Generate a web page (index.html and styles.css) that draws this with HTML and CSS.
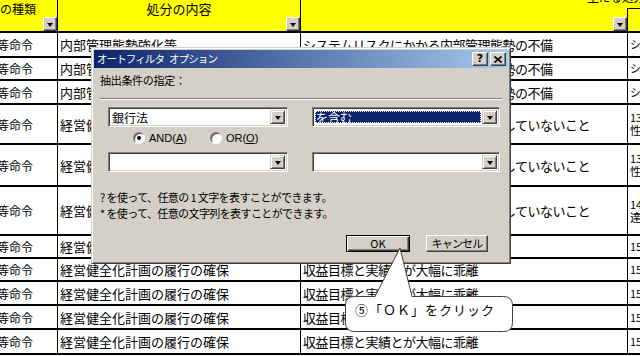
FILE: index.html
```html
<!DOCTYPE html>
<html lang="ja">
<head>
    <meta charset="UTF-8">
    <title>オートフィルタ オプション</title>
    <link rel="stylesheet" href="styles.css">
</head>
<body>
    <div class="sheet">
        <div class="row head">
            <div class="cell col1"><span class="htext">の種類</span><span class="fbtn"></span></div>
            <div class="cell col2"><span class="htext">処分の内容</span><span class="fbtn"></span></div>
            <div class="cell col3 c3h"><span class="over">主たる処分理由</span><span class="fbtn"></span></div>
            <div class="cell col4 c4h"></div>
        </div>

        <div class="row r25">
            <div class="cell col1"><span class="cut">等命令</span></div>
            <div class="cell col2">内部管理態勢強化等</div>
            <div class="cell col3">システムリスクにかかる内部管理態勢の不備</div>
            <div class="cell col4">シ</div>
        </div>
        <div class="row r23">
            <div class="cell col1"><span class="cut">等命令</span></div>
            <div class="cell col2">内部管理態勢強化等</div>
            <div class="cell col3">システムリスクにかかる内部管理態勢の不備</div>
            <div class="cell col4">シ</div>
        </div>
        <div class="row r24">
            <div class="cell col1"><span class="cut">等命令</span></div>
            <div class="cell col2">内部管理態勢強化等</div>
            <div class="cell col3">システムリスクにかかる内部管理態勢の不備</div>
            <div class="cell col4">シ</div>
        </div>
        <div class="row r40">
            <div class="cell col1"><span class="cut">等命令</span></div>
            <div class="cell col2">経営健全化計画の履行の確保</div>
            <div class="cell col3">経営健全化計画の収益目標等を達成していないこと</div>
            <div class="cell col4">13<br>性</div>
        </div>
        <div class="row r42">
            <div class="cell col1"><span class="cut">等命令</span></div>
            <div class="cell col2">経営健全化計画の履行の確保</div>
            <div class="cell col3">経営健全化計画の収益目標等を達成していないこと</div>
            <div class="cell col4">13<br>性</div>
        </div>
        <div class="row r49">
            <div class="cell col1"><span class="cut">等命令</span></div>
            <div class="cell col2">経営健全化計画の履行の確保</div>
            <div class="cell col3">経営健全化計画の収益目標等を達成していないこと</div>
            <div class="cell col4">14<br>達</div>
        </div>
        <div class="row r23">
            <div class="cell col1"><span class="cut">等命令</span></div>
            <div class="cell col2">経営健全化計画の履行の確保</div>
            <div class="cell col3">収益目標と実績とが大幅に乖離</div>
            <div class="cell col4">15</div>
        </div>
        <div class="row r23">
            <div class="cell col1"><span class="cut">等命令</span></div>
            <div class="cell col2">経営健全化計画の履行の確保</div>
            <div class="cell col3">収益目標と実績とが大幅に乖離</div>
            <div class="cell col4">15</div>
        </div>
        <div class="row r24">
            <div class="cell col1"><span class="cut">等命令</span></div>
            <div class="cell col2">経営健全化計画の履行の確保</div>
            <div class="cell col3">収益目標と実績とが大幅に乖離</div>
            <div class="cell col4">15</div>
        </div>
        <div class="row r24">
            <div class="cell col1"><span class="cut">等命令</span></div>
            <div class="cell col2">経営健全化計画の履行の確保</div>
            <div class="cell col3">収益目標と実績とが大幅に乖離</div>
            <div class="cell col4">15</div>
        </div>
        <div class="row r25">
            <div class="cell col1"><span class="cut">等命令</span></div>
            <div class="cell col2">経営健全化計画の履行の確保</div>
            <div class="cell col3">収益目標と実績とが大幅に乖離</div>
            <div class="cell col4">15</div>
        </div>
    </div>

    <!-- AutoFilter dialog -->
    <div class="dialog">
        <div class="titlebar">
            <span class="title">オートフィルタ<span class="gap"></span>オプション</span>
            <span class="tbtn">?</span>
            <span class="tbtn">
                <svg width="8" height="7" viewBox="0 0 8 7"><path d="M0.5 0.5 L7.5 6.5 M7.5 0.5 L0.5 6.5" stroke="#000" stroke-width="1.6"/></svg>
            </span>
        </div>
        <div class="dlg-body">
            <div class="label">抽出条件の指定：</div>
            <div class="sep"></div>

            <div class="combo-row">
                <div class="combo wide"><span class="combo-text">銀行法</span><span class="drop"></span></div>
                <div class="combo narrow"><span class="combo-text selected">を含む</span><span class="drop"></span></div>
            </div>

            <div class="radio-row">
                <label class="radio"><span class="dot checked"></span><span>AND(<u>A</u>)</span></label>
                <label class="radio"><span class="dot"></span><span>OR(<u>O</u>)</span></label>
            </div>

            <div class="combo-row second">
                <div class="combo wide"><span class="combo-text"></span><span class="drop"></span></div>
                <div class="combo narrow"><span class="combo-text"></span><span class="drop"></span></div>
            </div>

            <div class="help">
                <p>? を使って、任意の 1 文字を表すことができます。</p>
                <p>* を使って、任意の文字列を表すことができます。</p>
            </div>

            <div class="actions">
                <button class="btn default">OK</button>
                <button class="btn">キャンセル</button>
            </div>
        </div>
    </div>

    <!-- callout pointing at OK -->
    <div class="callout">
        <svg class="callout-shape" width="180" height="92" viewBox="0 0 180 92">
            <path d="M14.5 52.5 H35 L60 4 L72 52.5 H163.5 Q172.5 52.5 172.5 61.5 V78.5 Q172.5 87.5 163.5 87.5 H14.5 Q5.5 87.5 5.5 78.5 V61.5 Q5.5 52.5 14.5 52.5 Z" fill="#fff" stroke="#404040" stroke-width="1"/>
        </svg>
        <div class="callout-text">⑤「ＯＫ」をクリック</div>
    </div>
</body>
</html>
```

FILE: styles.css
```css
* {
    margin: 0;
    padding: 0;
    box-sizing: border-box;
}

body {
    width: 640px;
    height: 356px;
    overflow: hidden;
    position: relative;
    background-color: #fff;
    color: #000;
    font-family: "Noto Sans CJK JP", sans-serif;
}

/* spreadsheet */
.row {
    display: flex;
    border-bottom: 2px solid #000;
}

.head {
    height: 33px;
    background-color: #ff0;
}

.r23 { height: 23px; }
.r24 { height: 24px; }
.r25 { height: 25px; }
.r40 { height: 40px; }
.r42 { height: 42px; }
.r49 { height: 49px; }

.cell {
    display: flex;
    align-items: center;
    padding-left: 2px;
    white-space: nowrap;
    overflow: hidden;
    font-size: 13px;
    line-height: 15px;
    border-right: 1px solid #000;
}

.col1 {
    width: 58px;
    font-size: 12px;
}

.col2 {
    width: 243px;
}

.col3 {
    width: 327px;
    letter-spacing: -0.5px;
}

.col4 {
    flex: 1;
    border-right: none;
    font-size: 11px;
    line-height: 13px;
    padding-left: 2px;
    overflow: hidden;
}

.cut {
    margin-left: -5px;
}

.head .cell {
    flex-direction: column;
    align-items: stretch;
    padding: 0;
    overflow: visible;
}

.htext {
    text-align: center;
    padding-top: 2px;
    line-height: 14px;
}

.head .col1 .htext {
    text-align: left;
}

.head .c3h {
    width: 326px;
    border-right: none;
}

.over {
    margin-left: 286px;
    margin-top: -10px;
    height: 13px;
    line-height: 13px;
    font-size: 12px;
}

.head .c4h {
    margin-top: 8px;
    border-left: 1px solid #000;
    border-top: 1px solid #000;
}

.fbtn {
    margin-top: auto;
    align-self: flex-end;
    width: 14px;
    height: 14px;
    position: relative;
    background-color: #d4d0c8;
    border: 1px solid;
    border-color: #fff #404040 #404040 #fff;
    box-shadow: inset -1px -1px #808080;
}

.fbtn::after,
.drop::after {
    content: "";
    position: absolute;
    left: 50%;
    top: 50%;
    margin-left: -3px;
    margin-top: -1px;
    border-left: 3.5px solid transparent;
    border-right: 3.5px solid transparent;
    border-top: 4px solid #000;
}

/* dialog */
.dialog {
    position: absolute;
    left: 91px;
    top: 47px;
    width: 420px;
    height: 217px;
    padding: 2px;
    background-color: #d4d0c8;
    border: 1px solid;
    border-color: #d4d0c8 #404040 #404040 #d4d0c8;
    box-shadow: inset 1px 1px #fff, inset -1px -1px #808080;
    font-size: 11px;
    line-height: 12px;
}

.titlebar {
    height: 18px;
    display: flex;
    align-items: center;
    padding: 0 2px 0 3px;
    background: linear-gradient(to right, #0a246a, #a6caf0);
    color: #fff;
}

.title {
    flex: 1;
    display: flex;
    font-size: 10.5px;
    letter-spacing: -0.9px;
}

.gap {
    width: 5px;
}

.tbtn {
    width: 16px;
    height: 14px;
    display: flex;
    align-items: center;
    justify-content: center;
    background-color: #d4d0c8;
    border: 1px solid;
    border-color: #fff #404040 #404040 #fff;
    box-shadow: inset -1px -1px #808080;
    color: #000;
    font-family: "DejaVu Sans", sans-serif;
    font-weight: bold;
    font-size: 11px;
}

.tbtn + .tbtn {
    margin-left: 2px;
}

.dlg-body {
    padding: 0 6px;
}

.label {
    margin-top: 6px;
    letter-spacing: -0.3px;
}

.sep {
    margin-top: 12px;
    height: 2px;
    border-top: 1px solid #808080;
    border-bottom: 1px solid #fff;
}

.combo-row {
    display: flex;
    gap: 24px;
    margin-top: 7px;
    padding-left: 8px;
}

.combo-row.second {
    margin-top: 8px;
}

.combo {
    height: 20px;
    display: flex;
    padding: 2px;
    background-color: #fff;
    border: 1px solid;
    border-color: #808080 #fff #fff #808080;
    box-shadow: inset 1px 1px #404040, inset -1px -1px #d4d0c8;
}

.combo.wide {
    width: 180px;
}

.combo.narrow {
    width: 188px;
}

.combo-text {
    flex: 1;
    padding-left: 1px;
    font-size: 12px;
    line-height: 14px;
    margin: 1px 1px 1px 0;
}

.combo-text.selected {
    background-color: #0a246a;
    color: #fff;
    outline: 1px dotted #fff;
    outline-offset: -1px;
}

.drop {
    width: 15px;
    position: relative;
    background-color: #d4d0c8;
    border: 1px solid;
    border-color: #d4d0c8 #404040 #404040 #d4d0c8;
    box-shadow: inset 1px 1px #fff, inset -1px -1px #808080;
}

.radio-row {
    display: flex;
    margin-top: 5px;
    padding-left: 33px;
    height: 12px;
    font-family: "Liberation Sans", sans-serif;
    font-size: 11px;
}

.radio {
    display: flex;
    align-items: center;
    gap: 4px;
}

.radio + .radio {
    margin-left: 23px;
}

.dot {
    width: 12px;
    height: 12px;
    border-radius: 50%;
    background-color: #fff;
    border: 1px solid;
    border-color: #808080 #fff #fff #808080;
    box-shadow: inset 1px 1px #404040;
    position: relative;
}

.dot.checked::after {
    content: "";
    position: absolute;
    left: 3px;
    top: 3px;
    width: 4px;
    height: 4px;
    border-radius: 50%;
    background-color: #000;
}

.help {
    margin-top: 17px;
    line-height: 16px;
    letter-spacing: -0.6px;
}

.actions {
    display: flex;
    justify-content: flex-end;
    gap: 16px;
    margin-top: 14px;
    padding-right: 14px;
}

.btn {
    height: 17px;
    background-color: #d4d0c8;
    border: 1px solid;
    border-color: #fff #404040 #404040 #fff;
    box-shadow: inset -1px -1px #808080;
    font-family: "Noto Sans CJK JP", sans-serif;
    font-size: 11px;
    line-height: 13px;
    color: #000;
}

.btn.default {
    width: 64px;
    border-color: #000;
    box-shadow: inset 1px 1px #fff, inset -1px -1px #404040, inset -2px -2px #808080;
}

.btn:not(.default) {
    width: 62px;
    letter-spacing: -0.8px;
}

/* callout */
.callout {
    position: absolute;
    left: 340px;
    top: 244px;
    width: 180px;
    height: 92px;
}

.callout-shape {
    position: absolute;
    left: 0;
    top: 0;
}

.callout-text {
    position: relative;
    padding: 58px 0 0 15px;
    font-size: 13px;
    line-height: 16px;
    letter-spacing: 1px;
    white-space: nowrap;
}
```
